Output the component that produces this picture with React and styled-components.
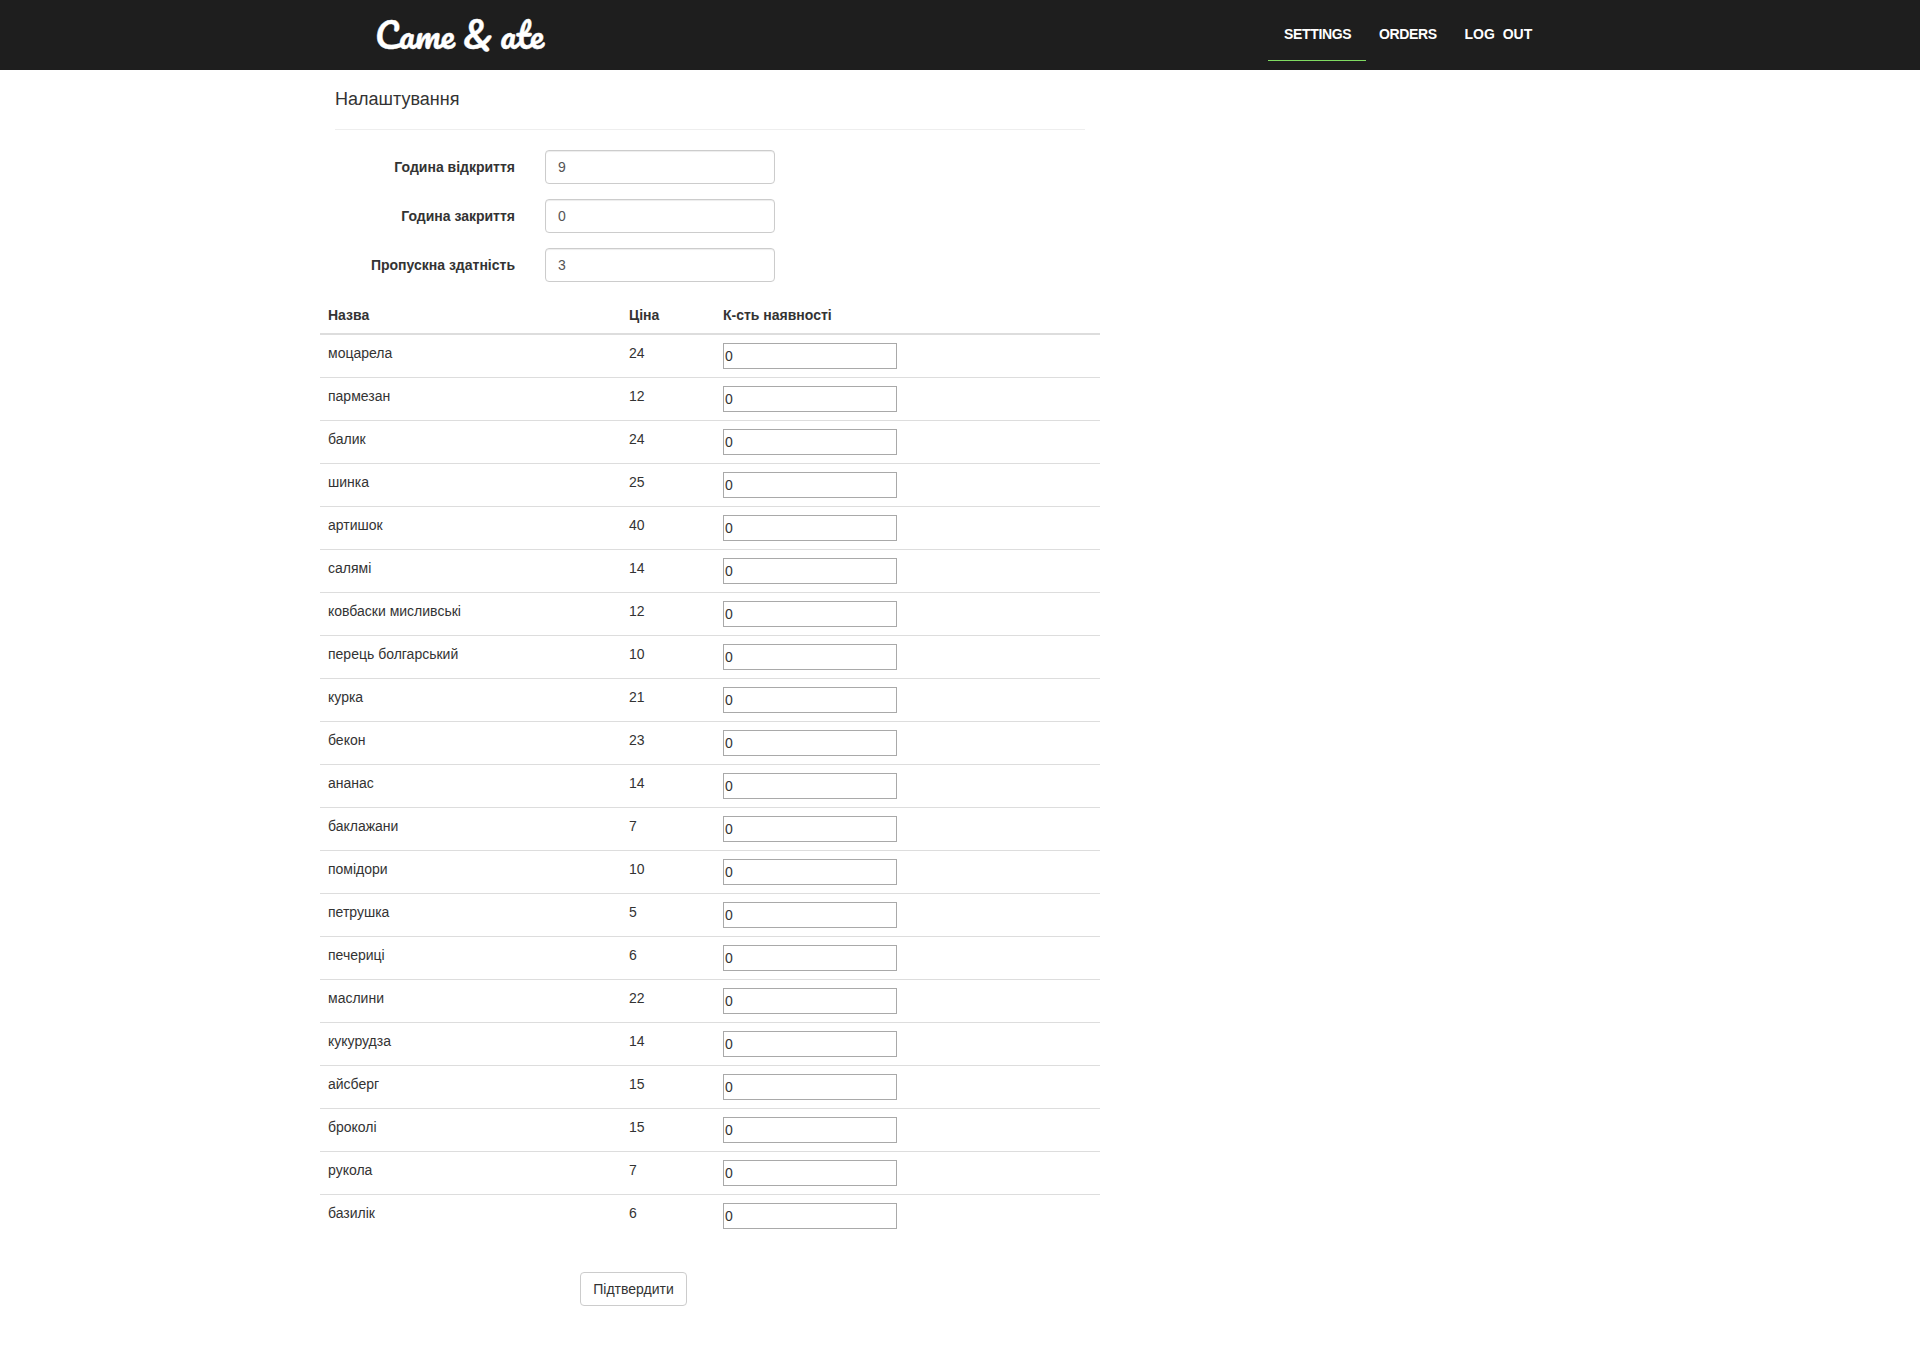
import React from "react";
import styled, { createGlobalStyle } from "styled-components";

const GlobalStyle = createGlobalStyle`
  *, *::before, *::after { box-sizing: border-box; }
  body {
    margin: 0;
    background: #fff;
    color: #333;
    font: 14px/20px "Liberation Sans", Arial, sans-serif;
  }
`;

const Header = styled.header`
  display: flex;
  height: 70px;
  background: #1e1e1e;
`;

const HeaderInner = styled.div`
  display: flex;
  justify-content: space-between;
  align-items: flex-start;
  width: 1170px;
  margin: 0 auto;
`;

const Brand = styled.a`
  display: block;
  height: 70px;
  color: #fff;
  font: 400 34.5px/70px Pacifico, Lato, "Liberation Sans", sans-serif;
  word-spacing: -1.2px;
  -webkit-text-stroke: 0.35px #fff;
  white-space: nowrap;
`;

const Nav = styled.nav`
  display: flex;
  height: 61px;
`;

const NavLink = styled.a`
  display: block;
  width: ${(p) => p.$width}px;
  padding: 24px 0 0 ${(p) => p.$indent}px;
  border-bottom: 1px solid ${(p) => (p.$active ? "#7fdb61" : "transparent")};
  color: #fff;
  font-weight: 700;
  white-space: nowrap;
  letter-spacing: ${(p) => p.$tracking || 0}px;
  word-spacing: 4px;
`;

const Page = styled.main`
  width: 780px;
  margin-left: 320px;
`;

const Form = styled.form`
  display: flex;
  flex-direction: column;
`;

const Title = styled.h1`
  margin: 0 15px 20px;
  padding: 19px 0 20px;
  border-bottom: 1px solid #eee;
  font-size: 18px;
  font-weight: 400;
  line-height: 20px;
`;

const Field = styled.div`
  display: flex;
  gap: 30px;
  margin-bottom: 15px;
`;

const Label = styled.label`
  width: 195px;
  padding-top: 7px;
  text-align: right;
  font-weight: 700;
`;

const TextInput = styled.input`
  width: 230px;
  height: 34px;
  padding: 6px 12px;
  border: 1px solid #ccc;
  border-radius: 4px;
  background: #fff;
  box-shadow: inset 0 1px 1px rgba(0, 0, 0, 0.075);
  color: #555;
  font: inherit;
`;

const Table = styled.table`
  width: 780px;
  table-layout: fixed;
  border-spacing: 0;
`;

const HeadCell = styled.th`
  width: ${(p) => p.$width}px;
  height: 38px;
  padding: 8px;
  border-bottom: 2px solid #ddd;
  text-align: left;
  vertical-align: bottom;
  font-weight: 700;
`;

const Cell = styled.td`
  height: 43px;
  padding: 8px;
  vertical-align: top;
  border-bottom: 1px solid #ddd;

  tr:last-child > & {
    border-bottom-color: transparent;
  }
`;

const StockInput = styled.input`
  display: block;
  width: 174px;
  height: 26px;
  padding: 1px;
  border: 1px solid #a9a9a9;
  border-radius: 0;
  background: #fff;
  color: #333;
  font: inherit;
`;

const SubmitButton = styled.button`
  align-self: flex-start;
  width: 107px;
  height: 34px;
  margin: 34px 0 20px 260px;
  padding: 6px 0;
  border: 1px solid #ccc;
  border-radius: 4px;
  background: #fff;
  color: #333;
  font: inherit;
`;

const settings = [
  ["Година відкриття", "9"],
  ["Година закриття", "0"],
  ["Пропускна здатність", "3"],
];

const ingredients = [
  ["моцарела", 24],
  ["пармезан", 12],
  ["балик", 24],
  ["шинка", 25],
  ["артишок", 40],
  ["салямі", 14],
  ["ковбаски мисливські", 12],
  ["перець болгарський", 10],
  ["курка", 21],
  ["бекон", 23],
  ["ананас", 14],
  ["баклажани", 7],
  ["помідори", 10],
  ["петрушка", 5],
  ["печериці", 6],
  ["маслини", 22],
  ["кукурудза", 14],
  ["айсберг", 15],
  ["броколі", 15],
  ["рукола", 7],
  ["базилік", 6],
];

export default function App() {
  return (
    <>
      <GlobalStyle />
      <Header>
        <HeaderInner>
          <Brand>Came &amp; ate</Brand>
          <Nav>
            <NavLink $active $width={98} $indent={16} $tracking={-0.35}>SETTINGS</NavLink>
            <NavLink $width={84} $indent={13} $tracking={-0.35}>ORDERS</NavLink>
            <NavLink $width={95} $indent={14.5}>LOG OUT</NavLink>
          </Nav>
        </HeaderInner>
      </Header>
      <Page>
        <Form>
          <Title>Налаштування</Title>
          {settings.map(([label, value]) => (
            <Field key={label}>
              <Label>{label}</Label>
              <TextInput defaultValue={value} />
            </Field>
          ))}
          <Table>
            <thead>
              <tr>
                <HeadCell $width={301}>Назва</HeadCell>
                <HeadCell $width={94}>Ціна</HeadCell>
                <HeadCell $width={385}>К-сть наявності</HeadCell>
              </tr>
            </thead>
            <tbody>
              {ingredients.map(([name, price]) => (
                <tr key={name}>
                  <Cell>{name}</Cell>
                  <Cell>{price}</Cell>
                  <Cell>
                    <StockInput defaultValue="0" />
                  </Cell>
                </tr>
              ))}
            </tbody>
          </Table>
          <SubmitButton type="button">Підтвердити</SubmitButton>
        </Form>
      </Page>
    </>
  );
}
